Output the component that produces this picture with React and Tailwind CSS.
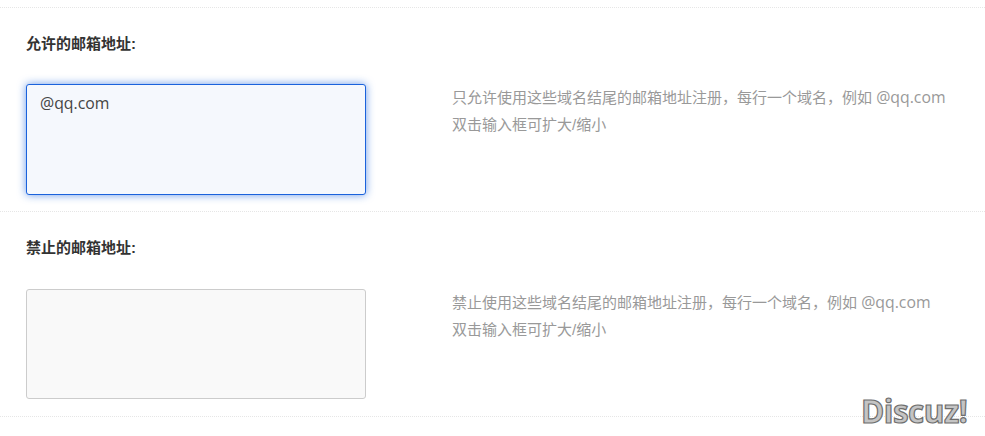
export default function App() {
  const font = "font-['Liberation_Sans','Noto_Sans_CJK_SC',sans-serif]";
  const Row = ({ label, desc, focused, value }) => (
    <div className={focused
      ? "h-[204px] border-b border-dotted border-[#e6e6e6] pl-[26px] flex flex-col"
      : "h-[205px] border-b border-dotted border-[#e6e6e6] pl-[26px] flex flex-col"}>
      <div className="h-[76px] pt-[27px] text-[15px] leading-[18px] font-bold text-[#333]">{label}</div>
      <div className="flex">
        <textarea
          readOnly
          value={value}
          className={focused
            ? "w-[340px] h-[111px] resize-none rounded-[3px] border border-[#1a62dc] bg-[#f5f8fd] px-[13px] py-[8px] text-[15.8px] leading-[20px] text-[#444] shadow-[0_0_8px_rgba(26,98,220,0.65)] outline-none font-['Open_Sans','Noto_Sans_CJK_SC',sans-serif]"
            : "w-[340px] h-[110px] mt-[1px] resize-none rounded-[3px] border border-[#cccccc] bg-[#f9f9f9] px-[13px] py-[8px] text-[15.8px] leading-[20px] text-[#444] outline-none"}
        />
        <div className={focused
          ? "ml-[86px] text-[15px] leading-[27px] text-[#999] whitespace-nowrap"
          : "ml-[86px] pt-[1px] text-[15px] leading-[27px] text-[#999] whitespace-nowrap"}>
          <div>{desc[0]}<span className="text-[15.8px] font-['Open_Sans',sans-serif]">@qq.com</span></div>
          <div>{desc[1]}</div>
        </div>
      </div>
    </div>
  );
  return (
    <div className={`relative w-[985px] h-[436px] overflow-hidden bg-white ${font}`}>
      <div className="h-[8px] border-b border-dotted border-[#e6e6e6]" />
      <Row label="允许的邮箱地址:" value="@qq.com" focused desc={["只允许使用这些域名结尾的邮箱地址注册，每行一个域名，例如 ", "双击输入框可扩大/缩小"]} />
      <Row label="禁止的邮箱地址:" value="" desc={["禁止使用这些域名结尾的邮箱地址注册，每行一个域名，例如 ", "双击输入框可扩大/缩小"]} />
      <div className="absolute left-[861px] top-[392px] text-[31.5px] leading-[38px] font-bold tracking-[-0.5px] text-[#c4c4c4] [-webkit-text-stroke:1.2px_#6e6e6e] font-['Open_Sans',sans-serif]">Discuz!</div>
    </div>
  );
}
